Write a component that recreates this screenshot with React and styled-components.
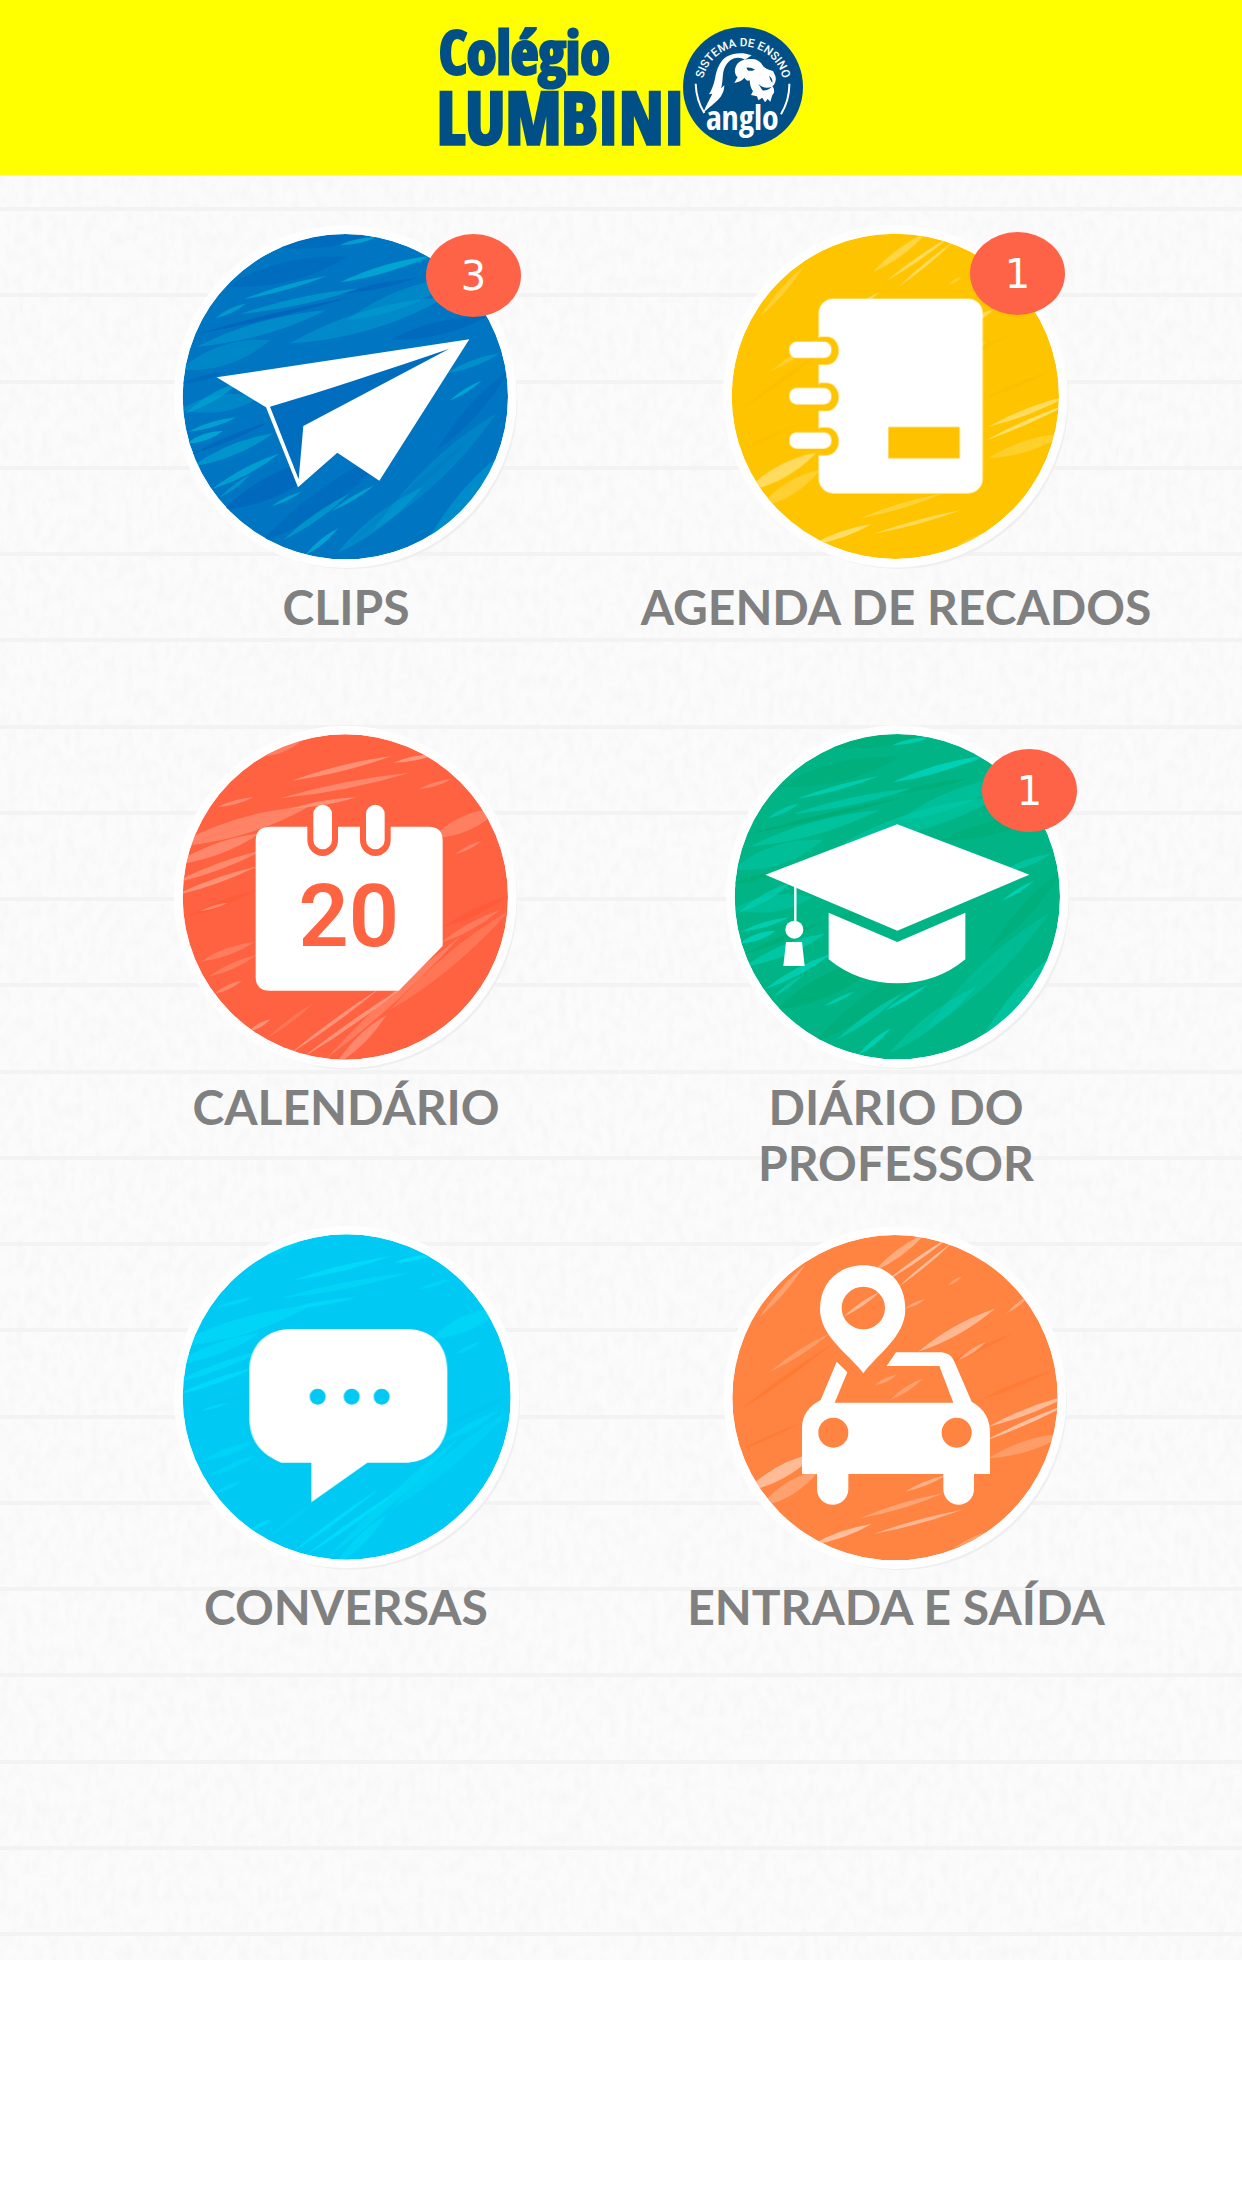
import React from "react";
import styled, { createGlobalStyle } from "styled-components";

const GlobalStyle = createGlobalStyle`
  body {
    margin: 0;
    background: #ffffff;
    font-family: Lato, "Open Sans", sans-serif;
  }
`;

const Header = styled.header`
  display: flex;
  align-items: center;
  justify-content: center;
  height: 175px;
  background: #ffff00;
`;

const Logo = styled.svg`
  display: block;
  width: 364px;
  height: 122px;
  overflow: visible;
`;

const Main = styled.main`
  position: relative;
  padding: 42px 71px 269px;
  background: #fbfbfb;
`;

const Paper = styled.svg`
  position: absolute;
  inset: 0;
  width: 100%;
  height: 100%;
`;

const Menu = styled.nav`
  position: relative;
  display: grid;
  grid-template-columns: 1fr 1fr;
  grid-auto-rows: minmax(474px, auto);
  row-gap: 26px;
`;

const Tile = styled.a`
  display: flex;
  flex-direction: column;
  align-items: center;
  gap: 2px;
  padding: 0 10px;
  color: #808080;
  text-decoration: none;
`;

const IconBox = styled.span`
  position: relative;
  display: block;
  width: 360px;
  height: 360px;
`;

const Icon = styled.svg`
  display: block;
  width: 100%;
  height: 100%;
`;

const Badge = styled.span`
  position: absolute;
  left: ${(p) => p.$left}px;
  top: ${(p) => p.$top}px;
  display: flex;
  align-items: center;
  justify-content: center;
  width: 95px;
  height: 83px;
  border-radius: 50%;
  background: #ff6347;
  color: #ffffff;
  font: 40px/48px "DejaVu Sans", Verdana, sans-serif;
`;

const Label = styled.span`
  max-width: ${(p) => (p.$narrow ? "400px" : "none")};
  font-size: 48px;
  font-weight: 700;
  line-height: 56px;
  text-align: center;
`;

/* Pencil strokes: [x1, y1, x2, y2, thickness, opacity] */
const sweep = {
  light: [
    [250, 268, 500, 198, 22, 0.8], [540, 217, 805, 138, 34, 0.9], [640, 185, 815, 140, 26, 0.6],
    [165, 325, 260, 280, 20, 0.7], [240, 312, 600, 235, 34, 0.55], [110, 410, 500, 300, 60, 0.45],
    [390, 400, 860, 260, 90, 0.4], [75, 610, 240, 515, 34, 0.6], [85, 665, 230, 622, 24, 0.85],
    [80, 700, 190, 662, 30, 0.9], [95, 770, 340, 670, 50, 0.6], [155, 838, 360, 730, 32, 0.8],
    [180, 862, 270, 795, 18, 0.6], [335, 888, 425, 845, 16, 0.8], [515, 903, 645, 825, 18, 0.85],
    [370, 990, 570, 850, 30, 0.6], [435, 1036, 535, 955, 24, 0.9], [530, 1030, 790, 830, 60, 0.4],
    [868, 572, 965, 512, 18, 0.9], [860, 490, 1020, 430, 30, 0.5], [640, 960, 1010, 610, 90, 0.3],
    [780, 1030, 1040, 720, 80, 0.45], [540, 105, 650, 82, 20, 0.8], [60, 480, 330, 390, 90, 0.35],
    [60, 600, 300, 560, 80, 0.35], [560, 330, 900, 200, 80, 0.35],
  ],
  dark: [
    [110, 372, 570, 262, 20, 0.9], [200, 230, 560, 140, 90, 0.6], [540, 252, 770, 205, 24, 0.8],
    [90, 735, 330, 635, 22, 0.8], [190, 900, 520, 740, 100, 0.8], [830, 720, 1050, 480, 60, 0.6],
    [60, 522, 200, 485, 22, 0.7], [690, 390, 980, 320, 60, 0.7], [570, 1000, 940, 680, 30, 0.4],
    [300, 1000, 700, 720, 90, 0.6], [330, 110, 620, 80, 60, 0.6], [340, 650, 640, 520, 50, 0.6],
  ],
};

const crayon = {
  light: [
    [395, 212, 695, 138, 26, 0.7], [700, 158, 830, 132, 20, 0.8], [360, 265, 750, 188, 30, 0.55],
    [170, 292, 280, 262, 18, 0.6], [300, 140, 425, 92, 34, 0.45], [390, 296, 590, 262, 20, 0.7],
    [40, 410, 450, 288, 76, 0.5], [40, 465, 300, 370, 50, 0.55], [40, 520, 310, 420, 30, 0.6],
    [40, 558, 290, 470, 24, 0.7], [120, 603, 205, 578, 14, 0.6], [120, 755, 285, 695, 32, 0.4],
    [145, 800, 290, 735, 26, 0.4], [165, 850, 245, 812, 20, 0.55], [775, 238, 875, 207, 18, 0.5],
    [815, 385, 1020, 295, 70, 0.45], [885, 433, 965, 393, 16, 0.5], [840, 700, 1020, 600, 30, 0.4],
    [265, 965, 332, 928, 18, 0.7], [385, 1035, 660, 835, 18, 0.75], [425, 1045, 730, 832, 20, 0.75],
    [500, 1045, 900, 680, 44, 0.4], [525, 1065, 680, 915, 44, 0.55], [690, 900, 1050, 600, 60, 0.3],
    [320, 985, 460, 880, 18, 0.3],
  ],
  dark: [
    [90, 400, 300, 330, 14, 0.5], [80, 620, 290, 540, 30, 0.4], [850, 650, 1040, 560, 30, 0.5],
  ],
};

const chalk = {
  light: [
    [640, 185, 800, 68, 34, 0.55], [680, 212, 870, 80, 16, 0.8], [716, 230, 880, 95, 14, 0.8],
    [300, 320, 435, 165, 28, 0.4], [330, 485, 510, 370, 24, 0.35], [775, 425, 1005, 296, 40, 0.7],
    [895, 450, 978, 396, 18, 0.6], [985, 650, 1230, 555, 28, 0.75], [975, 692, 1230, 580, 18, 0.85],
    [985, 745, 1220, 670, 50, 0.35], [255, 845, 470, 728, 60, 0.75], [300, 890, 480, 780, 60, 0.4],
    [735, 845, 860, 795, 18, 0.6], [600, 925, 850, 850, 24, 0.45], [640, 972, 905, 900, 18, 0.7],
    [455, 1005, 635, 942, 28, 0.8], [735, 296, 795, 268, 14, 0.5], [645, 525, 710, 495, 18, 0.4],
    [690, 570, 790, 505, 22, 0.4], [865, 225, 905, 200, 14, 0.4], [1040, 310, 1110, 255, 16, 0.5],
    [550, 320, 660, 245, 18, 0.7], [880, 1015, 980, 965, 14, 0.4],
  ],
  dark: [
    [240, 600, 520, 400, 18, 0.5], [240, 720, 420, 640, 14, 0.4], [960, 570, 1180, 480, 20, 0.4],
    [820, 480, 1060, 370, 20, 0.4],
  ],
};

function Strokes({ list, color }) {
  return list.map(([x1, y1, x2, y2, w, o], i) => {
    const mx = (x1 + x2) / 2;
    const my = (y1 + y2) / 2;
    return (
      <path
        key={i}
        fill={color}
        opacity={o}
        d={`M${x1} ${y1}Q${mx - w / 4} ${my - w * 0.6} ${x2} ${y2}Q${mx + w / 4} ${my + w * 0.6} ${x1} ${y1}Z`}
      />
    );
  });
}

function Disc({ id, cx, cy, rx = 488, base, light, dark, strokes, shift = 0, faint = 1 }) {
  return (
    <>
      <ellipse cx={cx + 10} cy={cy + 12} rx={rx + 18} ry="506" fill="#efefef" />
      <ellipse cx={cx} cy={cy} rx={rx + 26} ry="514" fill="#fefefe" />
      <clipPath id={id}>
        <ellipse cx={cx} cy={cy} rx={rx} ry="488" />
      </clipPath>
      <g clipPath={`url(#${id})`}>
        <ellipse cx={cx} cy={cy} rx={rx} ry="488" fill={base} />
        <g transform={`translate(${shift} 0)`} opacity={faint}>
          <Strokes list={strokes.dark} color={dark} />
          <Strokes list={strokes.light} color={light} />
        </g>
      </g>
    </>
  );
}

function ClipsIcon() {
  return (
    <Icon viewBox="18 21 1080 1080" aria-hidden="true">
      <Disc id="disc-clips" cx={556} cy={560} base="#0075c2" light="#00a9d4" dark="#0065bb" strokes={sweep} />
      <path fill="#fff" d="M170 502L928 388L658 812L532 728L414 832L318 592Z" />
      <path fill="#006dbf" d="M330 590C500 540 680 480 868 416L430 648L416 808Z" />
    </Icon>
  );
}

function AgendaIcon() {
  return (
    <Icon viewBox="258 21 1080 1080" aria-hidden="true">
      <Disc id="disc-agenda" cx={796} cy={559} rx={491} base="#ffc400" light="#ffe78f" dark="#fbb900" strokes={chalk} shift={90} faint={0.9} />
      <rect x="566" y="266" width="492" height="584" rx="44" fill="#fff" />
      <rect x="775" y="651" width="214" height="94" fill="#ffc200" />
      {[420, 559, 692].map((y) => (
        <g key={y}>
          <path fill="#ffc400" d={`M560 ${y - 28}L570 ${y - 40}H590A36 42 0 0 1 590 ${y + 44}H566L560 ${y + 30}Z`} />
          <rect x="478" y={y - 25} width="126" height="49" rx="22" fill="#fff" />
        </g>
      ))}
    </Icon>
  );
}

function CalendarIcon() {
  return (
    <Icon viewBox="18 21 1080 1080" aria-hidden="true">
      <Disc id="disc-calendar" cx={556} cy={561} base="#ff6240" light="#ffa58e" dark="#ff5430" strokes={crayon} />
      <path fill="#fff" d="M330 350H806Q848 350 848 392V708L716 842H330Q287 842 287 800V392Q287 350 330 350Z" />
      {[488, 646].map((x) => (
        <g key={x}>
          <path fill="#ff6240" d={`M${x - 46} 345H${x + 46}V390A46 48 0 0 1 ${x - 46} 390Z`} />
          <rect x={x - 28} y="284" width="56" height="134" rx="28" fill="#fff" />
        </g>
      ))}
      <text x="566" y="709" textAnchor="middle" fontFamily="Roboto, sans-serif" fontWeight="600" fontSize="264" fill="#ff6442">20</text>
    </Icon>
  );
}

function DiaryIcon() {
  return (
    <Icon viewBox="48 21 1080 1080" aria-hidden="true">
      <Disc id="disc-diary" cx={592} cy={560} base="#00b486" light="#00d2b8" dark="#00ac75" strokes={sweep} shift={38} />
      <path fill="#fff" d="M592 343L988 494L592 662L196 494Z" />
      <path fill="#fff" d="M386 608L592 696L796 608V748Q710 820 592 820T386 748Z" />
      <path stroke="#fff" strokeWidth="7" d="M286 530V640" />
      <circle cx="283" cy="659" r="27" fill="#fff" />
      <path fill="#fff" d="M258 696H306L314 768H250Z" />
    </Icon>
  );
}

function ChatIcon() {
  return (
    <Icon viewBox="18 21 1080 1080" aria-hidden="true">
      <Disc id="disc-chat" cx={560} cy={561} rx={492} base="#00caf4" light="#00e6fd" dark="#00c4f0" strokes={crayon} faint={0.8} />
      <path fill="#fff" d="M392 357H740C815 357 862 405 862 482V630C862 700 815 752 745 758H622L454 877V758H364C300 730 268 690 268 620V482C268 405 320 357 392 357Z" />
      <circle cx="473" cy="560" r="24" fill="#00caf4" />
      <circle cx="575" cy="560" r="24" fill="#00caf4" />
      <circle cx="665" cy="560" r="24" fill="#00caf4" />
    </Icon>
  );
}

function CarIcon() {
  return (
    <Icon viewBox="168 21 1080 1080" aria-hidden="true">
      <Disc id="disc-car" cx={705} cy={563} base="#ff8341" light="#ffcdb3" dark="#ff7426" strokes={chalk} />
      <path fill="#fff" fillRule="evenodd" d="M610 490C570 435 480 380 480 298C480 218 535 166 610 166S736 218 736 298C736 380 650 435 610 490ZM545 294A65 64 0 1 0 675 294A65 64 0 1 0 545 294Z" />
      <path fill="#fff" d="M708 427H845Q872 430 882 452L935 575Q990 605 990 668V792H942V838A46 46 0 0 1 850 838V792H565V838A47 46 0 0 1 471 838V792H426V650Q428 598 482 570L530 455L562 487L524 578H880L838 468H680Z" />
      <circle cx="520" cy="668" r="45" fill="#ff8341" />
      <circle cx="890" cy="668" r="45" fill="#ff8341" />
    </Icon>
  );
}

function SchoolLogo() {
  const heavy = 'Impact, "Open Sans Condensed", "Liberation Sans Narrow", sans-serif';
  return (
    <Logo viewBox="60 80 1092 366" role="img" aria-label="Colégio Lumbini, Sistema de Ensino Anglo">
      <g fill="#005087" stroke="#005087" fontFamily={heavy} fontWeight="800">
        <text x="60" y="221" fontSize="180" strokeWidth="9">Colégio</text>
        <text x="53" y="432" fontSize="214" strokeWidth="10">LUMBINI</text>
      </g>
      <circle cx="972" cy="260" r="180" fill="#005087" />
      <path id="motto" fill="none" d="M850 260A122 122 0 0 1 1094 260" />
      <text fontFamily="Roboto, sans-serif" fontWeight="500" fontSize="35" fill="#fff" textAnchor="middle">
        <textPath href="#motto" startOffset="50%">SISTEMA DE ENSINO</textPath>
      </text>
      <path fill="none" stroke="#fff" strokeWidth="6" d="M830 250Q832 300 856 338M1111 250Q1112 298 1086 342" />
      <path fill="#fff" d="M925 168C905 178 893 205 888 235C884 255 878 268 870 282L880 280C872 296 866 306 852 338C880 312 900 300 908 284C914 274 915 268 916 255L906 264C914 240 908 220 918 200C924 188 934 178 946 174C955 170 970 172 978 178L998 165C970 155 945 158 925 168Z" />
      <path fill="#fff" d="M1000 176C975 174 956 182 950 200C944 214 950 226 956 230L946 248C962 244 970 240 976 232C982 238 984 244 992 240C993 256 996 264 1002 272L996 284L1014 288L1018 300L1030 292L1038 306L1046 296L1054 304L1060 284C1068 278 1066 264 1060 258C1070 250 1073 235 1068 225L1062 212C1045 208 1032 200 1026 188C1018 180 1010 176 1000 176Z" />
      <path fill="#005087" d="M982 202Q996 200 1008 208Q994 214 986 210ZM1018 250Q1034 268 1058 260Q1046 272 1030 270ZM1050 226Q1062 234 1060 248Q1054 240 1050 226Z" />
      <text x="970" y="390" textAnchor="middle" fontFamily={heavy} fontWeight="700" fontSize="101" fill="#fff">anglo</text>
    </Logo>
  );
}

const ruleLines = Array.from({ length: 21 }, (_, i) => 34 + Math.round((i * 345) / 4));

function PaperTexture() {
  return (
    <Paper aria-hidden="true">
      <filter id="grain" x="0" y="0" width="100%" height="100%">
        <feTurbulence type="fractalNoise" baseFrequency="0.12 0.07" numOctaves="4" seed="4" />
        <feColorMatrix values="0 0 0 0 0.5  0 0 0 0 0.5  0 0 0 0 0.5  0.14 0 0 0 -0.055" />
      </filter>
      <rect width="100%" height="100%" filter="url(#grain)" />
      {ruleLines.map((y) => (
        <line key={y} x1="0" x2="100%" y1={y} y2={y} stroke="#f3f3f3" strokeWidth="4" />
      ))}
    </Paper>
  );
}

const items = [
  { label: "CLIPS", Art: ClipsIcon, badge: { count: 3, left: 260, top: 17 } },
  { label: "AGENDA DE RECADOS", Art: AgendaIcon, badge: { count: 1, left: 254, top: 15 } },
  { label: "CALENDÁRIO", Art: CalendarIcon },
  { label: "DIÁRIO DO PROFESSOR", Art: DiaryIcon, narrow: true, badge: { count: 1, left: 266, top: 32 } },
  { label: "CONVERSAS", Art: ChatIcon },
  { label: "ENTRADA E SAÍDA", Art: CarIcon },
];

export default function App() {
  return (
    <>
      <GlobalStyle />
      <Header>
        <SchoolLogo />
      </Header>
      <Main>
        <PaperTexture />
        <Menu>
          {items.map(({ label, Art, badge, narrow }) => (
            <Tile key={label} href="#">
              <IconBox>
                <Art />
                {badge && (
                  <Badge $left={badge.left} $top={badge.top}>
                    {badge.count}
                  </Badge>
                )}
              </IconBox>
              <Label $narrow={narrow}>{label}</Label>
            </Tile>
          ))}
        </Menu>
      </Main>
    </>
  );
}
